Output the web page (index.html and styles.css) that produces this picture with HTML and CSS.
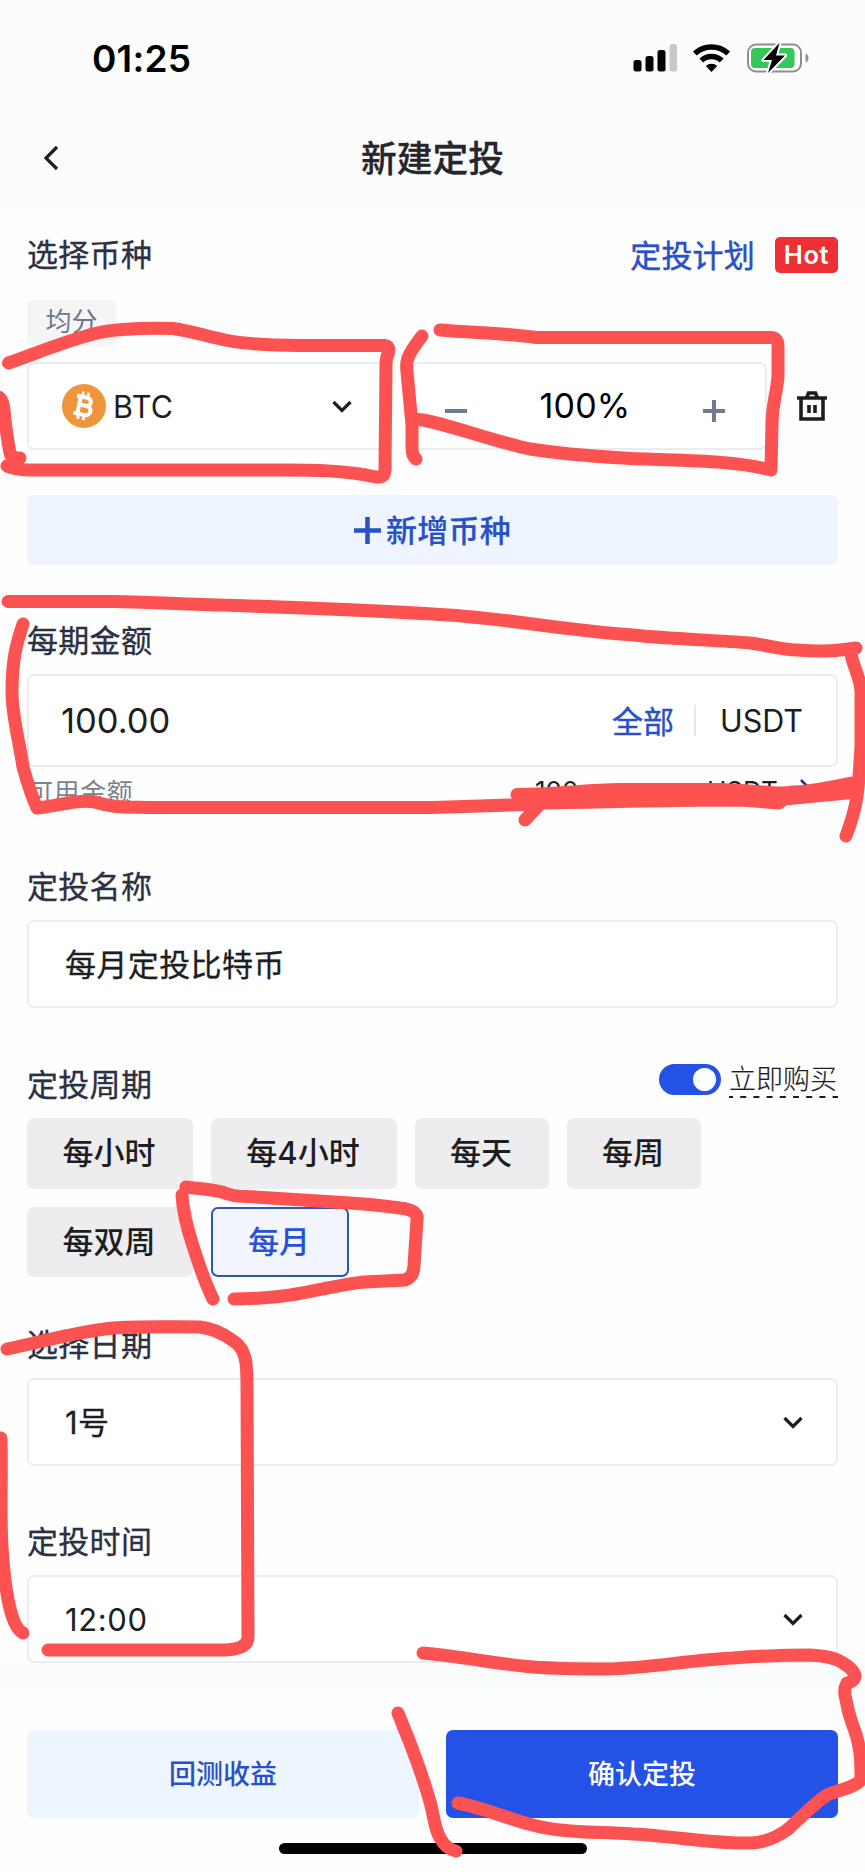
FILE: index.html
```html
<!DOCTYPE html>
<html lang="zh-CN">
<head>
<meta charset="utf-8">
<title>新建定投</title>
<link rel="stylesheet" href="styles.css">
</head>
<body>
<div class="screen">
  <header class="top">
    <div class="status">
      <span class="clock">01:25</span>
      <svg class="status-icons" width="176" height="30" viewBox="0 0 176 30">
        <rect x="0.5" y="17" width="8" height="11.500" rx="2.500"/>
        <rect x="12.500" y="13" width="8" height="15.500" rx="2.500"/>
        <rect x="24.500" y="7" width="8" height="21.500" rx="2.500"/>
        <rect x="36.500" y="1" width="7.500" height="27.500" rx="2.500" fill="#c8c8c8"/>
        <g fill="none" stroke="#000" stroke-width="5.600">
          <path d="M61.800 10.500a24.500 24.500 0 0 1 33.400 0"/>
          <path d="M68.300 17.600a14.700 14.700 0 0 1 20.400 0"/>
        </g>
        <path d="M78.500 29l-5.700-6a8.200 8.200 0 0 1 11.400 0z"/>
        <rect x="115" y="1.500" width="53" height="27" rx="8" fill="#fff" stroke="#8e8e8e" stroke-width="2"/>
        <rect x="118" y="5" width="43.500" height="20" rx="4" fill="#35c759"/>
        <path d="M172.500 10.500c4 1.500 4 7.500 0 9z" fill="#8e8e8e"/>
        <path d="M146.500 0L130.500 17h8.500l-4 13 17-17.500h-9z" stroke="#fff" stroke-width="4" stroke-linejoin="round" paint-order="stroke"/>
      </svg>
    </div>
    <div class="nav">
      <svg class="back" width="16" height="26" viewBox="0 0 16 26"><path d="M14 2L3 13l11 11"/></svg>
      <h1 class="title">新建定投</h1>
    </div>
  </header>

  <main class="form">
    <div class="head-row">
      <span class="label">选择币种</span>
      <span class="plan"><span class="plan-text">定投计划</span><b class="hot">Hot</b></span>
    </div>
    <div class="tag">均分</div>
    <div class="coin-row">
      <div class="box coin">
        <svg width="44" height="44" viewBox="0 0 44 44">
          <circle cx="22" cy="22" r="22" fill="#f0953c"/>
          <g transform="rotate(12 22 22)" fill="none" stroke="#fff">
            <path stroke-width="4" d="M17 13v18M13 13.200h10.500c6 0 6 8.300 0 8.300H17h7.500c6.500 0 6.500 9.300 0 9.300H13"/>
            <path stroke-width="2.800" d="M18.500 8v5M24 8v5M18.500 31v5M24 31v5"/>
          </g>
        </svg>
        <span class="coin-name">BTC</span>
        <svg class="chev" width="20" height="13" viewBox="0 0 20 13"><path d="M1.500 2L10 10.500 18.500 2"/></svg>
      </div>
      <div class="box stepper">
        <svg class="sign" width="22" height="22" viewBox="0 0 22 22"><path d="M0 11h22"/></svg>
        <span class="percent">100%</span>
        <svg class="sign" width="22" height="22" viewBox="0 0 22 22"><path d="M0 11h22M11 0v22"/></svg>
      </div>
      <svg class="trash" width="30" height="30" viewBox="0 0 30 30">
        <path d="M0 7h30M4 7v21h22V7M9.500 7l2-5h7l2 5M12 14v8M18 14v8"/>
      </svg>
    </div>
    <div class="add">
      <svg width="27" height="27" viewBox="0 0 27 27"><path d="M0 13.500h27M13.500 0v27"/></svg>
      <span class="add-text">新增币种</span>
    </div>

    <div class="label amount-label">每期金额</div>
    <div class="box amount">
      <span class="value">100.00</span>
      <span class="all">全部</span>
      <i class="rule"></i>
      <span class="unit">USDT</span>
    </div>
    <div class="available">
      <span class="avail-label">可用金额</span>
      <span class="avail-num">100</span>
      <span class="avail-unit">USDT</span>
      <svg width="24" height="26" viewBox="0 0 24 26"><path d="M2 9h19l-7-7M22 17H3l7 7"/></svg>
    </div>

    <div class="label name-label">定投名称</div>
    <div class="box field"><span class="field-text">每月定投比特币</span></div>

    <div class="head-row cycle-row">
      <span class="label">定投周期</span>
      <span class="instant">
        <i class="toggle"></i>
        <span class="instant-text">立即购买
          <svg width="109" height="2" viewBox="0 0 109 2"><path d="M0 1h109"/></svg>
        </span>
      </span>
    </div>
    <div class="chips">
      <span class="chip w3">每小时</span>
      <span class="chip w4">每4小时</span>
      <span class="chip w2">每天</span>
      <span class="chip w2">每周</span>
      <span class="chip w3">每双周</span>
      <span class="chip on">每月</span>
    </div>

    <div class="label date-label">选择日期</div>
    <div class="box field">
      <span class="field-text">1号</span>
      <svg class="chev" width="20" height="13" viewBox="0 0 20 13"><path d="M1.500 2L10 10.500 18.500 2"/></svg>
    </div>
    <div class="label time-label">定投时间</div>
    <div class="box field">
      <span class="time">12:00</span>
      <svg class="chev" width="20" height="13" viewBox="0 0 20 13"><path d="M1.500 2L10 10.500 18.500 2"/></svg>
    </div>
  </main>

  <div class="shade"></div>
  <footer class="actions">
    <button class="btn soft">回测收益</button>
    <button class="btn solid">确认定投</button>
  </footer>
  <div class="home"></div>

  <!-- Hand-drawn marker strokes over the form -->
  <svg class="marker" width="865" height="1872" viewBox="0 0 865 1872">
    <path d="M8.500 363C40 352 65 341 97 333C120 328 150 328 173 328.500C192 331 205 336 225 340C250 345 275 345.500 300 345.500H384Q391 346 388 354Q386 358 386 365L385 470Q385 478 376 477C345 470 310 470 283 470H27Q13 469 7 466M-2 397Q3 398 4 411Q7 438 10 453Q11 458 20 458L12 464"/>
    <path d="M440 330C475 333 505 333 536 337.500H770Q778 337 778 346V377C776 397 772 405 772 425L771 470C730 459 670 461 623 458C590 456 555 453 530 449C490 440 450 425 423 420L412 419M422 336Q411 350 408 358Q406 363 407 372L412 425V448Q412 456 416 459"/>
    <path d="M8 601.500H117C220 605 330 608 433 614C500 617 560 630 633 635C670 639 715 640 750 643C768 645 780 650 797 650Q825 652 840 650L856 648M851 653C852 665 861 677 861 693V747C858 785 860 799 846 836M23 624C16 645 12 660 12 693C12 715 19 740 23 767Q30 792 37 808C60 806 75 799 95 802C113 808 128 807 148 807.500H433L540 804L525 820"/>
    <path d="M517 794.500C570 794 580 790 620 789.500H716C740 790 760 792 780 793C810 793 830 787 853 783M540 803C610 802 660 800 740 800L779 803L784 799L852 792.500M530 798L650 795L784 797"/>
    <path d="M186 1187C202 1189 210 1189 222 1192C234 1197 240 1196 255 1197L350 1203C370 1204 385 1206 400 1208Q419 1210 417 1220L414 1265Q414 1277 405 1280L365 1282C340 1284 305 1294 283 1296Q255 1299 234 1299M182 1195C183 1212 188 1231 193 1246Q204 1281 213 1299"/>
    <path d="M7 1349C45 1341 80 1331 113 1328C140 1326 170 1327 200 1327Q217 1329 232 1340Q244 1347 246 1363Q247 1372 247 1383L248 1637Q248 1649 225 1650H48M1 1438C2 1475 0 1515 2 1547Q7 1625 23 1633"/>
    <path d="M423 1653C460 1656 495 1664 533 1667C560 1669 580 1669 607 1669C650 1668 690 1660 733 1658C760 1656 785 1655 810 1655Q833 1656 843 1663Q852 1668 855 1675Q855 1681 847 1683Q843 1690 846 1700Q848 1712 852 1723C861 1745 861 1760 861 1780C854 1788 838 1790 827 1795C813 1804 803 1816 787 1830Q768 1843 750 1843C710 1844 675 1836 633 1834C605 1832 585 1833 560 1830C525 1827 490 1809 458 1803"/>
    <path d="M398 1713L410 1743C418 1764 424 1780 430 1802C434 1815 434 1828 440 1838Q446 1849 456 1851"/>
  </svg>
</div>
</body>
</html>
```

FILE: styles.css
```css
* { box-sizing: border-box; }
body {
  margin: 0;
  background: #fefefe;
  font-family: Inter, "Noto Sans CJK SC", sans-serif;
  color: #1d1e22;
}
.screen {
  position: relative;
  width: 865px;
  height: 1872px;
  overflow: hidden;
  display: flex;
  flex-direction: column;
}
svg { display: block; flex: none; }

.top { height: 210px; background: #fcfcfd; }
.status {
  height: 116px;
  padding: 0 56px 0 92px;
  display: flex;
  align-items: center;
  justify-content: space-between;
}
.clock { font-size: 37px; font-weight: 600; color: #000; letter-spacing: 0.2px; }
.nav {
  height: 84px;
  padding-left: 43px;
  display: flex;
  align-items: center;
}
.back path, .chev path {
  fill: none;
  stroke: #1d1e22;
  stroke-width: 3.200;
}
.title {
  margin: -5px 0 0;
  width: 779px;
  padding-right: 32px;
  text-align: center;
  font-size: 35.800px;
  font-weight: 500;
  color: #26262c;
  -webkit-text-stroke: 0.3px #26262c;
}

.form { padding: 0 27px; height: 1454px; }
.label {
  font-size: 31px;
  line-height: 46px;
  letter-spacing: 0.3px;
  color: #2b3042;
  -webkit-text-stroke: 0.35px #2b3042;
}
.head-row {
  height: 90px;
  display: flex;
  align-items: center;
  justify-content: space-between;
}
.plan {
  display: flex;
  align-items: center;
  gap: 20px;
  font-size: 31px;
  color: #2850c8;
}
.plan-text { margin-top: -4px; letter-spacing: 0.2px; -webkit-text-stroke: 0.5px #2850c8; }
.hot {
  width: 63px;
  height: 36px;
  border-radius: 5px;
  background: #ee2f34;
  color: #fff;
  font-size: 25.500px;
  font-weight: 600;
  line-height: 35px;
  letter-spacing: 0.6px;
  text-align: center;
}
.tag {
  width: 89px;
  height: 46px;
  border-radius: 5px;
  background: #f5f5f6;
  color: #6c778c;
  font-size: 26px;
  line-height: 43px;
  text-align: center;
}
.box {
  border: 2px solid #ebecee;
  border-radius: 7px;
  background: #fff;
  display: flex;
  align-items: center;
}
.coin-row {
  margin-top: 16px;
  display: flex;
  align-items: center;
  height: 88px;
}
.coin { width: 360px; height: 88px; padding: 0 33px 0 33px; }
.coin-name { margin-left: 7px; font-size: 30.500px; letter-spacing: 0.4px; flex: 1; }
.stepper {
  width: 355px;
  height: 88px;
  margin-left: 25px;
  padding: 0 40px 0 31px;
  justify-content: space-between;
}
.sign { margin-top: 10px; }
.sign path { stroke: #6f7a90; stroke-width: 4; }
.percent { font-size: 34px; line-height: 40px; letter-spacing: 0.2px; color: #000; margin-top: -1px; }
.trash { margin-left: 30px; }
.trash path { fill: none; stroke: #1d1e22; stroke-width: 3.600; }
.add {
  height: 70px;
  margin-top: 45px;
  border-radius: 6px;
  background: #eef5fe;
  display: flex;
  align-items: center;
  justify-content: center;
  gap: 5px;
  font-size: 31px;
  font-weight: 500;
  color: #2850c8;
}
.add path { stroke: #2850c8; stroke-width: 4.500; }
.add-text { margin-top: -4px; letter-spacing: 0.3px; -webkit-text-stroke: 0.2px #2850c8; }

.amount-label { margin-top: 53px; }
.amount { height: 93px; margin-top: 10px; padding: 0 33px 0 32px; }
.value { flex: 1; font-size: 34.500px; }
.all { margin-top: -3px; font-size: 31px; color: #2850c8; -webkit-text-stroke: 0.4px #2850c8; }
.rule { width: 2px; height: 31px; margin: 0 24px 0 20px; background: #e6e8ec; }
.unit { font-size: 30.500px; }
.available {
  height: 52px;
  padding-bottom: 5px;
  display: flex;
  align-items: center;
  font-size: 26px;
  color: #1d1e22;
}
.avail-label { width: 508px; color: #7d818b; letter-spacing: 0.6px; }
.avail-num { width: 172px; }
.avail-unit { width: 80px; }
.available path { fill: none; stroke: #2b3370; stroke-width: 2.600; }

.name-label { margin-top: 45px; }
.field {
  height: 88px;
  margin-top: 10px;
  padding: 0 33px 0 36px;
  justify-content: space-between;
  font-size: 31px;
}
.field-text { margin-top: -4px; letter-spacing: 0.4px; -webkit-text-stroke: 0.3px #1d1e22; }
.time { font-size: 31px; letter-spacing: 0.6px; }

.cycle-row { height: 66px; margin-top: 44px; }
.cycle-row .label { margin-top: -1px; }
.instant { display: flex; align-items: center; gap: 8px; margin-top: -11px; }
.toggle {
  width: 62px;
  height: 31px;
  padding: 4px 5px;
  border-radius: 16px;
  background: #2451e6;
  display: flex;
  justify-content: flex-end;
}
.toggle::after {
  content: "";
  width: 23px;
  height: 23px;
  border-radius: 50%;
  background: #fff;
}
.instant-text {
  position: relative;
  width: 109px;
  font-size: 27px;
  font-weight: 300;
  line-height: 34px;
  white-space: nowrap;
  -webkit-text-stroke: 0.2px #1d1e22;
}
.instant-text svg { position: absolute; left: 0; bottom: -1px; }
.instant-text path { stroke: #1d1e22; stroke-width: 2; stroke-dasharray: 6 7.200; stroke-dashoffset: 2; }

.chips { display: flex; flex-wrap: wrap; gap: 18px; }
.chip {
  height: 70.500px;
  border-radius: 7px;
  background: #ededf0;
  font-size: 31px;
  font-weight: 500;
  line-height: 70px;
  text-align: center;
  padding-right: 2px;
}
.w2 { width: 134px; }
.w3 { width: 166px; }
.w4 { width: 186px; }
.on {
  width: 138px;
  border: 2px solid #2f56b4;
  background: #f2f5fe;
  color: #2850d8;
  line-height: 66px;
}

.date-label { margin-top: 45px; }
.time-label { margin-top: 53px; }

.shade { height: 25px; background: #fafbfd; }
.actions {
  height: 129px;
  padding: 41px 27px 0;
  display: flex;
  gap: 27px;
}
.btn {
  width: 392px;
  height: 88px;
  border: 0;
  border-radius: 7px;
  padding: 0 0 4px;
  font: 500 27px Inter, "Noto Sans CJK SC", sans-serif;
}
.soft { background: #edf5fe; color: #2850c8; }
.solid { background: #2451e6; color: #fff; }
.home {
  width: 308px;
  height: 11px;
  margin: 25px 0 0 279px;
  border-radius: 6px;
  background: #000;
}
.marker { position: absolute; inset: 0; pointer-events: none; }
.marker path {
  fill: none;
  stroke: #fd5252;
  stroke-width: 13;
  stroke-linecap: round;
  stroke-linejoin: round;
}
```
